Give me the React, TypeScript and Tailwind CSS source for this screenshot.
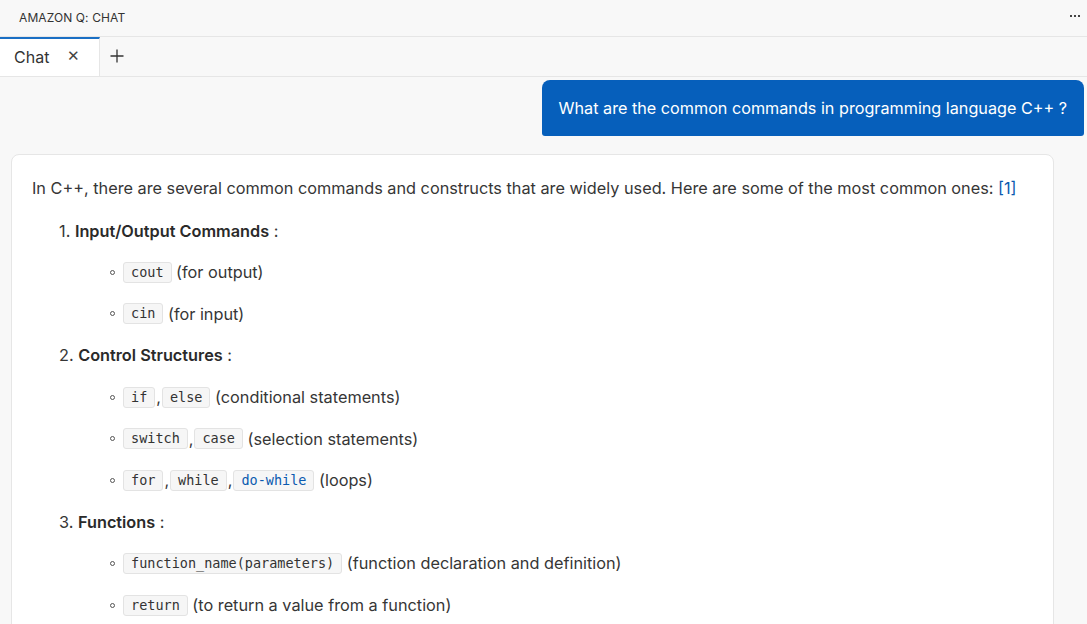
import React from "react";

const Code = ({ children, blue }: { children: React.ReactNode; blue?: boolean }) => (
  <code
    className={`inline-block h-[21px] rounded-[3px] border border-[#e3e3e3] bg-[#f6f6f6] px-[7px] align-middle font-['DejaVu_Sans_Mono',monospace] text-[13.5px] leading-[19px] ${
      blue ? "text-[#0a5ab0]" : "text-[#333]"
    }`}
  >
    {children}
  </code>
);

const Bullet = ({ children }: { children: React.ReactNode }) => (
  <div className="flex h-[41.6px] items-center pl-[78px]">
    <span className="mr-[8px] h-[5px] w-[5px] rounded-full border border-[#555]" />
    <span className="flex items-center">{children}</span>
  </div>
);

const Num = ({ n, title }: { n: string; title: string }) => (
  <div className="flex h-[41.6px] items-center pl-[27px]">
    <span>{n}.&nbsp;</span>
    <b className="font-semibold text-[#2a2a2a]">{title}</b>
    <span>&nbsp;:</span>
  </div>
);

const Sep = () => <span className="mx-[1px]">,</span>;

export default function App() {
  return (
    <div className="h-[624px] w-[1087px] overflow-hidden bg-[#f8f8f8] font-['Inter',sans-serif] text-[#363636]">
      <div className="flex h-[37px] items-center justify-between border-b border-[#e6e6e6] pl-[19px] pr-[7px]">
        <span className="text-[12px] tracking-[0.1px] text-[#333]">AMAZON Q: CHAT</span>
        <span className="flex gap-[2px] pb-[4px]">
          <span className="h-[2px] w-[2px] bg-[#444]" />
          <span className="h-[2px] w-[2px] bg-[#444]" />
          <span className="h-[2px] w-[2px] bg-[#444]" />
        </span>
      </div>
      <div className="flex h-[40px] border-b border-[#e6e6e6]">
        <div className="flex w-[100px] items-center border-t-2 border-r border-t-[#1a6fc4] border-r-[#e6e6e6] bg-white pl-[14px] pb-[2px]">
          <span className="text-[16px] text-[#333]">Chat</span>
          <span className="ml-[18px] text-[15px] text-[#444]">✕</span>
        </div>
        <div className="flex items-center pl-[9px] pb-[2px]">
          <svg width="16" height="16" viewBox="0 0 16 16">
            <path d="M8 1.5v13M1.5 8h13" stroke="#333" strokeWidth="1.3" />
          </svg>
        </div>
      </div>
      <div className="flex justify-end pr-[3px] pt-[3px]">
        <div className="flex h-[56px] items-center rounded-t-[8px] rounded-b-[3px] bg-[#065fbb] px-[17px] text-[16.2px] text-white">
          What are the common commands in programming language C++ ?
        </div>
      </div>
      <div className="mt-[18px] ml-[11px] mr-[33px] rounded-[8px] border border-[#e6e6e6] bg-white px-[20px] pt-[12px] pb-[40px] text-[16.28px]">
        <div className="flex h-[43px] items-center">
          In C++, there are several common commands and constructs that are widely used. Here are some of the most common ones:&nbsp;
          <span className="text-[#0a5ab0]">[1]</span>
        </div>
        <Num n="1" title="Input/Output Commands" />
        <Bullet>
          <Code>cout</Code>&nbsp;(for output)
        </Bullet>
        <Bullet>
          <Code>cin</Code>&nbsp;(for input)
        </Bullet>
        <Num n="2" title="Control Structures" />
        <Bullet>
          <Code>if</Code>
          <Sep />
          <Code>else</Code>&nbsp;(conditional statements)
        </Bullet>
        <Bullet>
          <Code>switch</Code>
          <Sep />
          <Code>case</Code>&nbsp;(selection statements)
        </Bullet>
        <Bullet>
          <Code>for</Code>
          <Sep />
          <Code>while</Code>
          <Sep />
          <Code blue>do-while</Code>&nbsp;(loops)
        </Bullet>
        <Num n="3" title="Functions" />
        <Bullet>
          <Code>function_name(parameters)</Code>&nbsp;(function declaration and definition)
        </Bullet>
        <Bullet>
          <Code>return</Code>&nbsp;(to return a value from a function)
        </Bullet>
      </div>
    </div>
  );
}
